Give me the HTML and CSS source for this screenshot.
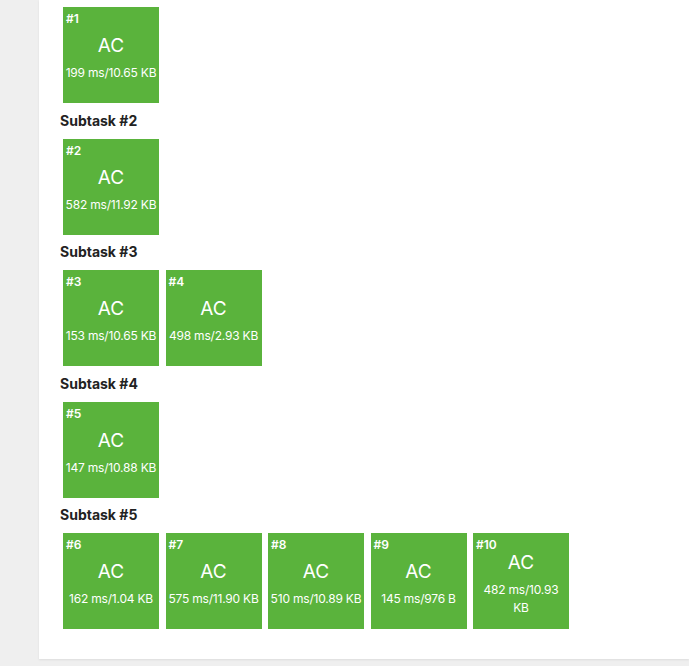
FILE: index.html
```html
<!DOCTYPE html>
<html>
<head>
<meta charset="utf-8">
<link rel="stylesheet" href="styles.css">
</head>
<body>
<div class="card">
  <div class="row">
    <div class="test"><span class="num">#1</span><div class="res">AC</div><div class="info">199 ms/10.65 KB</div></div>
  </div>
  <h4 class="subtask">Subtask #2</h4>
  <div class="row">
    <div class="test"><span class="num">#2</span><div class="res">AC</div><div class="info">582 ms/11.92 KB</div></div>
  </div>
  <h4 class="subtask">Subtask #3</h4>
  <div class="row">
    <div class="test"><span class="num">#3</span><div class="res">AC</div><div class="info">153 ms/10.65 KB</div></div>
    <div class="test"><span class="num">#4</span><div class="res">AC</div><div class="info">498 ms/2.93 KB</div></div>
  </div>
  <h4 class="subtask">Subtask #4</h4>
  <div class="row">
    <div class="test"><span class="num">#5</span><div class="res">AC</div><div class="info">147 ms/10.88 KB</div></div>
  </div>
  <h4 class="subtask">Subtask #5</h4>
  <div class="row last">
    <div class="test"><span class="num">#6</span><div class="res">AC</div><div class="info">162 ms/1.04 KB</div></div>
    <div class="test"><span class="num">#7</span><div class="res">AC</div><div class="info">575 ms/11.90 KB</div></div>
    <div class="test"><span class="num">#8</span><div class="res">AC</div><div class="info">510 ms/10.89 KB</div></div>
    <div class="test"><span class="num">#9</span><div class="res">AC</div><div class="info">145 ms/976 B</div></div>
    <div class="test"><span class="num">#10</span><div class="res">AC</div><div class="info wrap">482 ms/10.93<br>KB</div></div>
  </div>
</div>
</body>
</html>
```

FILE: styles.css
```css
html, body {
  margin: 0;
  padding: 0;
}
body {
  background: #efefef;
  font-family: Inter, "Liberation Sans", sans-serif;
  height: 666px;
  overflow: hidden;
}
.card {
  margin-left: 39px;
  background: #ffffff;
  padding: 7px 0 30px 21px;
  box-shadow: 0 1px 2px rgba(0, 0, 0, 0.08);
}
.subtask {
  margin: 0 0 8px 0;
  font-size: 14px;
  line-height: 20px;
  font-weight: 700;
  color: #222222;
}
.row {
  display: flex;
  gap: 6.5px;
  margin: 0 0 7.5px 3px;
}
.row.last {
  margin-bottom: 0;
}
.test {
  position: relative;
  width: 96px;
  height: 96px;
  background: #5ab33c;
  color: #ffffff;
  display: flex;
  flex-direction: column;
  align-items: center;
  justify-content: center;
  text-align: center;
}
.num {
  position: absolute;
  left: 3px;
  top: 5px;
  font-size: 12px;
  font-weight: 600;
  line-height: 14px;
}
.res {
  font-size: 19px;
  line-height: 24px;
  margin-top: 6px;
}
.info {
  font-size: 12px;
  line-height: 18px;
  margin-top: 6px;
  white-space: nowrap;
  letter-spacing: -0.2px;
}
```
